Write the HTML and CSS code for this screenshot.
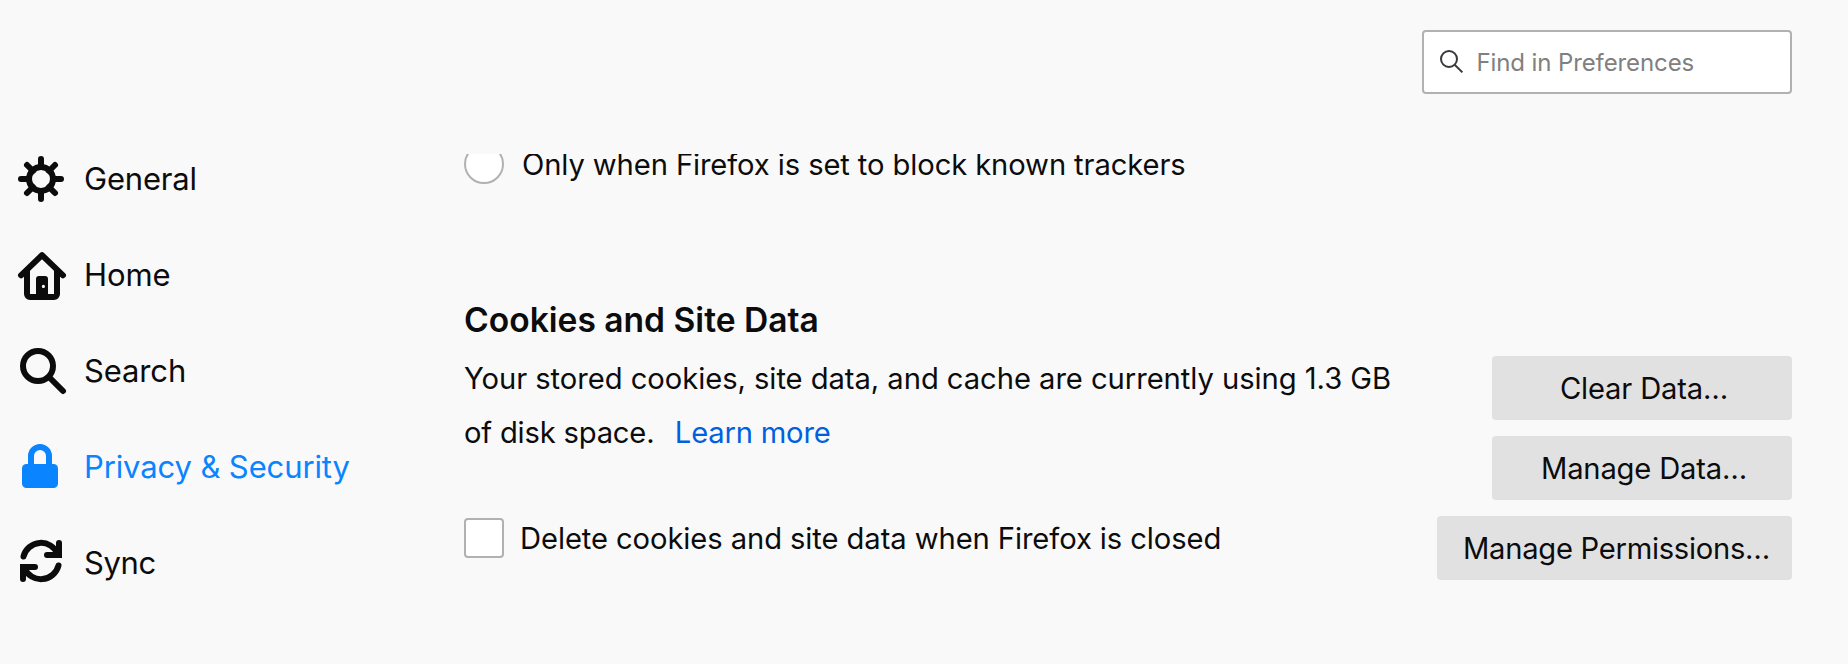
FILE: index.html
```
<!DOCTYPE html>
<html lang="en">
<head>
<meta charset="utf-8">
<title>Preferences</title>
<link rel="stylesheet" href="styles.css">
</head>
<body>
<div class="page">
  <nav class="sidebar">
    <a class="nav-item">
      <svg class="nav-icon" viewBox="0 0 52 52"><g fill="none" stroke="currentColor" stroke-width="6" stroke-linecap="round"><circle cx="25" cy="26" r="12"/><path d="M25 6v8M25 38v8M5 26h8M37 26h8M11 12l6 6M33 34l6 6M39 12l-6 6M17 34l-6 6"/></g></svg>
      <span class="nav-label nav-general">General</span>
    </a>
    <a class="nav-item">
      <svg class="nav-icon" viewBox="0 0 52 52"><g fill="none" stroke="currentColor" stroke-width="6" stroke-linecap="round" stroke-linejoin="round"><path d="M5 26.3L26 6.2l21 20.1"/><path d="M11 22v23a3 3 0 0 0 3 3h24a3 3 0 0 0 3-3V22"/></g><path fill="currentColor" fill-rule="evenodd" d="M20 48V30a3 3 0 0 1 3-3h6a3 3 0 0 1 3 3v18zM25.8 37.4a1.6 1.6 0 1 0 3.2 0a1.6 1.6 0 1 0-3.2 0z"/></svg>
      <span class="nav-label">Home</span>
    </a>
    <a class="nav-item">
      <svg class="nav-icon" viewBox="0 0 52 52"><g fill="none" stroke="currentColor" stroke-width="6" stroke-linecap="round"><circle cx="22" cy="21" r="15"/><path d="M33 32l14 14"/></g></svg>
      <span class="nav-label">Search</span>
    </a>
    <a class="nav-item selected">
      <svg class="nav-icon" viewBox="0 0 52 52"><path fill="none" stroke="currentColor" stroke-width="6" d="M15 25V15a9 9 0 0 1 18 0v10"/><rect x="6" y="23" width="36" height="24" rx="4.5" fill="currentColor"/></svg>
      <span class="nav-label">Privacy &amp; Security</span>
    </a>
    <a class="nav-item">
      <svg class="nav-icon" viewBox="0 0 52 52"><defs><g id="sync-arrow"><path fill="none" stroke="currentColor" stroke-width="6" stroke-linecap="round" d="M7.500 19.500A18 18 0 0 1 41.600 17M43 6v12H31"/><path fill="currentColor" d="M34 18l9-9h3v10.500a1.500 1.500 0 0 1-1.500 1.500H34z"/></g></defs><use href="#sync-arrow"/><use href="#sync-arrow" transform="rotate(180 25 24)"/></svg>
      <span class="nav-label nav-sync">Sync</span>
    </a>
  </nav>
  <div class="main">
    <div class="search-box">
      <svg class="search-icon" viewBox="0 0 24 24"><g fill="none" stroke="#38383d" stroke-width="2"><circle cx="9" cy="9" r="8"/><path d="M14.700 14.700l7.700 7.700"/></g></svg>
      <span class="label">Find in Preferences</span>
    </div>
    <div class="content">
      <label class="option radio-option"><span class="radio"></span><span class="label">Only when Firefox is set to block known trackers</span></label>
      <h2 class="heading">Cookies and Site Data</h2>
      <div class="columns">
        <div class="details">
          <p class="usage">Your stored cookies, site data, and cache are currently using 1.3 GB<br><span class="usage-end">of disk space.</span><a class="link">Learn more</a></p>
          <label class="option check-option"><span class="checkbox"></span><span class="label">Delete cookies and site data when Firefox is closed</span></label>
        </div>
        <div class="buttons">
          <button class="button">Clear Data…</button>
          <button class="button">Manage Data…</button>
          <button class="button wide">Manage Permissions…</button>
        </div>
      </div>
    </div>
  </div>
</div>
</body>
</html>
```
FILE: styles.css
```
* { box-sizing: border-box; }
body {
  margin: 0;
  background: #f9f9fa;
  color: #0c0c0d;
  font: 29.2px/40px Inter, "Liberation Sans", sans-serif;
  letter-spacing: -0.09px;
}
.page { display: flex; height: 664px; overflow: hidden; }
.sidebar { width: 464px; padding: 131px 0 0 16px; flex: none; }
.nav-item {
  display: flex;
  align-items: center;
  gap: 16px;
  height: 96px;
  font-size: 31px;
  letter-spacing: -0.12px;
}
.nav-icon { width: 52px; height: 52px; flex: none; }
.nav-label { padding-bottom: 1px; }
.nav-general { letter-spacing: -0.2px; }
.nav-sync { letter-spacing: -0.4px; }
.selected { color: #0a84ff; }
.main { width: 1328px; display: flex; flex-direction: column; }
.label { padding-top: 1px; }
.search-box {
  width: 370px;
  height: 64px;
  flex: none;
  margin: 30px 0 60px auto;
  padding-left: 16px;
  display: flex;
  align-items: center;
  gap: 12.5px;
  border: 2px solid #b1b1b1;
  border-radius: 4px;
  background: #fff;
  color: #808080;
  font-size: 24px;
  letter-spacing: -0.11px;
}
.search-icon { width: 24px; height: 24px; flex: none; }
.content { flex: 1; overflow: hidden; }
.option { display: flex; align-items: center; height: 40px; }
.radio-option { margin-top: -10px; gap: 18px; letter-spacing: -0.11px; }
.check-option { margin-top: 58.5px; gap: 16px; }
.radio, .checkbox {
  width: 40px;
  height: 40px;
  flex: none;
  border: 2px solid #b1b1b1;
  background: #fff;
}
.radio { border-radius: 50%; }
.checkbox { border-radius: 4px; }
.heading {
  margin: 115.5px 0 0;
  font-size: 33.6px;
  font-weight: 600;
  line-height: 40px;
  letter-spacing: 0;
}
.columns { display: flex; justify-content: space-between; margin-top: 11.5px; }
.details { flex: none; }
.usage { margin: 0; padding-top: 0.5px; line-height: 54px; letter-spacing: -0.052px; }
.usage-end { letter-spacing: -0.2px; }
.link { margin-left: 20.5px; color: #0060df; letter-spacing: -0.2px; }
.buttons { display: flex; flex-direction: column; align-items: flex-end; gap: 16px; padding-top: 5px; }
.button {
  width: 300px;
  height: 64px;
  padding: 1px 0 0 4px;
  border: 0;
  border-radius: 4px;
  background: #e1e1e2;
  color: inherit;
  font: inherit;
  letter-spacing: -0.185px;
  white-space: nowrap;
}
.wide { width: 355px; letter-spacing: -0.285px; }
```
